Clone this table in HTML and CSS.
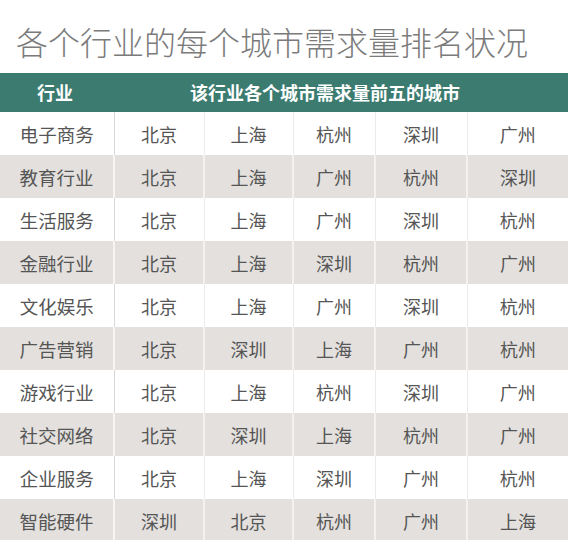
FILE: index.html
```html
<!DOCTYPE html>
<html lang="zh">
<head>
<meta charset="utf-8">
<link rel="stylesheet" href="styles.css">
</head>
<body>
<h1 class="title">各个行业的每个城市需求量排名状况</h1>
<table class="rank">
  <colgroup>
    <col class="c0"><col class="c1"><col class="c2"><col class="c3"><col class="c4"><col class="c5">
  </colgroup>
  <thead>
    <tr><th class="h-ind">行业</th><th class="h-city" colspan="5">该行业各个城市需求量前五的城市</th></tr>
  </thead>
  <tbody>
    <tr><td>电子商务</td><td>北京</td><td>上海</td><td>杭州</td><td>深圳</td><td>广州</td></tr>
    <tr><td>教育行业</td><td>北京</td><td>上海</td><td>广州</td><td>杭州</td><td>深圳</td></tr>
    <tr><td>生活服务</td><td>北京</td><td>上海</td><td>广州</td><td>深圳</td><td>杭州</td></tr>
    <tr><td>金融行业</td><td>北京</td><td>上海</td><td>深圳</td><td>杭州</td><td>广州</td></tr>
    <tr><td>文化娱乐</td><td>北京</td><td>上海</td><td>广州</td><td>深圳</td><td>杭州</td></tr>
    <tr><td>广告营销</td><td>北京</td><td>深圳</td><td>上海</td><td>广州</td><td>杭州</td></tr>
    <tr><td>游戏行业</td><td>北京</td><td>上海</td><td>杭州</td><td>深圳</td><td>广州</td></tr>
    <tr><td>社交网络</td><td>北京</td><td>深圳</td><td>上海</td><td>杭州</td><td>广州</td></tr>
    <tr><td>企业服务</td><td>北京</td><td>上海</td><td>深圳</td><td>广州</td><td>杭州</td></tr>
    <tr><td>智能硬件</td><td>深圳</td><td>北京</td><td>杭州</td><td>广州</td><td>上海</td></tr>
  </tbody>
</table>
</body>
</html>
```
FILE: styles.css
```css
html, body {
  margin: 0;
  padding: 0;
  background: #ffffff;
  font-family: "Noto Sans CJK SC", "Noto Sans", sans-serif;
}
.title {
  margin: 21px 0 12px 16px;
  font-size: 32px;
  line-height: 40px;
  font-weight: 300;
  color: #7b7b7b;
  letter-spacing: 0;
}
.rank {
  border-collapse: collapse;
  table-layout: fixed;
  width: 568px;
}
.c0 { width: 114px; }
.c1 { width: 90px; }
.c2 { width: 89px; }
.c3 { width: 82px; }
.c4 { width: 92px; }
.c5 { width: 101px; }
.rank thead th {
  background: #3b7b70;
  color: #ffffff;
  font-size: 18px;
  font-weight: 700;
  height: 39px;
  padding: 0;
  line-height: 39px;
}
.rank .h-ind { text-align: center; padding-right: 4px; }
.rank .h-city { text-align: center; padding-right: 32px; }
.rank tbody td {
  height: 43px;
  padding: 0;
  text-align: center;
  font-size: 18px;
  color: #555555;
  border-left: 1px solid #ebebeb;
}
.rank tbody td:first-child {
  border-left: none;
  border-right: 1px solid #d8d8d8;
  font-size: 18.5px;
}
.rank tbody tr:nth-child(even) td {
  background: #e3e0dd;
  border-left: 2px solid #f3f2f0;
}
.rank tbody tr:nth-child(even) td:first-child {
  border-left: none;
  border-right: 2px solid #f6f5f3;
}
```
